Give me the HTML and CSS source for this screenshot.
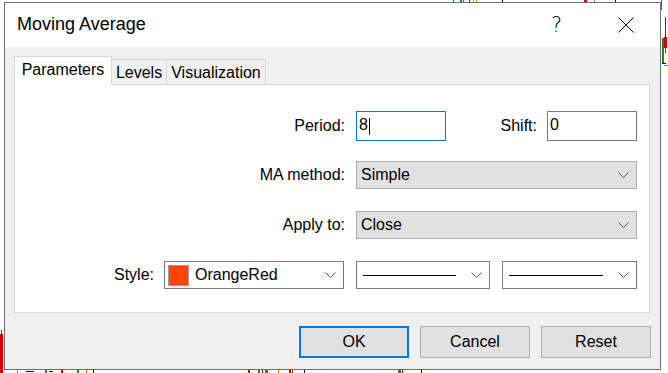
FILE: index.html
```html
<!DOCTYPE html>
<html lang="en">
<head>
  <meta charset="UTF-8">
  <title>Moving Average</title>
  <link rel="stylesheet" href="styles.css">
</head>
<body>

  <!-- chart behind the dialog, only the edges show -->
  <div class="chart">
    <span class="mk g" style="left:453px;top:0;width:1px;height:3px"></span>
    <span class="mk g" style="left:460px;top:0;width:2px;height:3px"></span>
    <span class="mk g" style="left:463px;top:0;width:1px;height:3px"></span>
    <span class="mk r" style="left:469px;top:0;width:1px;height:3px"></span>
    <span class="mk o" style="left:473px;top:0;width:1px;height:3px"></span>
    <span class="mk o" style="left:476px;top:0;width:1px;height:3px"></span>
    <span class="mk n" style="left:502px;top:0;width:1px;height:2px"></span>
    <span class="mk r" style="left:584px;top:0;width:3px;height:3px"></span>
    <span class="mk o" style="left:594px;top:0;width:1px;height:3px"></span>
    <span class="mk n" style="left:615px;top:0;width:1px;height:2px"></span>

    <span class="mk g" style="left:661px;top:0;width:1px;height:10px"></span>
    <span class="mk r" style="left:665px;top:17px;width:1px;height:36px"></span>
    <span class="mk r" style="left:664px;top:37px;width:3px;height:11px"></span>
    <span class="mk g" style="left:662px;top:38px;width:2px;height:26px"></span>
    <span class="mk n" style="left:662px;top:63px;width:4px;height:1px"></span>
    <span class="mk o" style="left:664px;top:65px;width:4px;height:1px"></span>

    <span class="mk r" style="left:1px;top:330px;width:1px;height:4px"></span>
    <span class="mk r" style="left:0;top:334px;width:3px;height:39px"></span>

    <span class="mk o" style="left:17px;top:370px;width:1px;height:3px"></span>
    <span class="mk n" style="left:26px;top:371px;width:8px;height:1px"></span>
    <span class="mk g" style="left:45px;top:370px;width:2px;height:3px"></span>
    <span class="mk n" style="left:49px;top:371px;width:4px;height:1px"></span>
    <span class="mk r" style="left:61px;top:370px;width:2px;height:3px"></span>
    <span class="mk g" style="left:77px;top:370px;width:2px;height:3px"></span>
    <span class="mk o" style="left:86px;top:370px;width:1px;height:3px"></span>
    <span class="mk n" style="left:93px;top:370px;width:1px;height:3px"></span>
    <span class="mk r" style="left:248px;top:370px;width:2px;height:3px"></span>
    <span class="mk g" style="left:258px;top:370px;width:2px;height:3px"></span>
    <span class="mk r" style="left:262px;top:370px;width:1px;height:3px"></span>
    <span class="mk g" style="left:265px;top:370px;width:3px;height:3px"></span>
    <span class="mk o" style="left:278px;top:370px;width:1px;height:3px"></span>
    <span class="mk r" style="left:289px;top:370px;width:2px;height:3px"></span>
    <span class="mk g" style="left:292px;top:370px;width:1px;height:3px"></span>
    <span class="mk n" style="left:304px;top:370px;width:1px;height:3px"></span>
    <span class="mk g" style="left:398px;top:370px;width:3px;height:3px"></span>
    <span class="mk r" style="left:402px;top:370px;width:1px;height:3px"></span>
    <span class="mk n" style="left:421px;top:370px;width:1px;height:3px"></span>
  </div>

  <div class="dialog">
    <div class="titlebar">
      <span class="title">Moving Average</span>
      <span class="cap-btn help">?</span>
      <span class="cap-btn close">
        <svg width="16" height="16" viewBox="0 0 16 16">
          <path d="M0.5 0.5 L15.5 15.5 M15.5 0.5 L0.5 15.5" stroke="#000" stroke-width="1" fill="none"/>
        </svg>
      </span>
    </div>

    <div class="dialog-body">
      <div class="tabs">
        <div class="tab active">Parameters</div>
        <div class="tab">Levels</div>
        <div class="tab">Visualization</div>
      </div>

      <div class="panel">
        <div class="row row-first">
          <span class="lbl">Period:</span>
          <div class="field focused">8<span class="caret"></span></div>
          <span class="lbl lbl-shift">Shift:</span>
          <div class="field">0</div>
        </div>

        <div class="row">
          <span class="lbl">MA method:</span>
          <div class="select wide">
            <span class="select-text">Simple</span>
            <svg class="chev" width="11" height="6" viewBox="0 0 11 6"><polyline points="0.5,0.5 5.5,5.5 10.5,0.5" fill="none" stroke="#555" stroke-width="1"/></svg>
          </div>
        </div>

        <div class="row">
          <span class="lbl">Apply to:</span>
          <div class="select wide">
            <span class="select-text">Close</span>
            <svg class="chev" width="11" height="6" viewBox="0 0 11 6"><polyline points="0.5,0.5 5.5,5.5 10.5,0.5" fill="none" stroke="#555" stroke-width="1"/></svg>
          </div>
        </div>

        <div class="row">
          <span class="lbl lbl-style">Style:</span>
          <div class="select light color-select">
            <span class="swatch"></span>
            <span class="select-text">OrangeRed</span>
            <svg class="chev" width="11" height="6" viewBox="0 0 11 6"><polyline points="0.5,0.5 5.5,5.5 10.5,0.5" fill="none" stroke="#555" stroke-width="1"/></svg>
          </div>
          <div class="select light line-select">
            <span class="line-sample"></span>
            <svg class="chev" width="11" height="6" viewBox="0 0 11 6"><polyline points="0.5,0.5 5.5,5.5 10.5,0.5" fill="none" stroke="#555" stroke-width="1"/></svg>
          </div>
          <div class="select light line-select last">
            <span class="line-sample"></span>
            <svg class="chev" width="11" height="6" viewBox="0 0 11 6"><polyline points="0.5,0.5 5.5,5.5 10.5,0.5" fill="none" stroke="#555" stroke-width="1"/></svg>
          </div>
        </div>
      </div>

      <div class="buttons">
        <button class="btn default">OK</button>
        <button class="btn">Cancel</button>
        <button class="btn">Reset</button>
      </div>
    </div>
  </div>

</body>
</html>
```

FILE: styles.css
```css
* { box-sizing: border-box; margin: 0; padding: 0; }
body {
  font-family: 'Liberation Sans', Arial, sans-serif;
  font-size: 16px;
  color: #000;
  background: #fff;
  padding: 2px 0 0 4px;
  position: relative;
  width: 668px;
  height: 373px;
  overflow: hidden;
}

/* chart marks around the window */
.chart { position: absolute; left: 0; top: 0; width: 668px; height: 373px; }
.mk { position: absolute; display: block; }
.mk.g { background: #1a8a1a; }
.mk.r { background: #d00000; }
.mk.o { background: #ff6a00; }
.mk.n { background: #000080; }

.dialog {
  position: relative;
  width: 657px;
  height: 368px;
  border: 1px solid #6f6f6f;
  background: #f0f0f0;
  display: flex;
  flex-direction: column;
}

.titlebar {
  height: 44px;
  background: #fff;
  display: flex;
  align-items: center;
  padding-left: 12px;
}
.title {
  font-size: 18px;
  flex: 1;
  padding-bottom: 1px;
}
.cap-btn {
  width: 68px;
  height: 44px;
  display: flex;
  align-items: center;
  justify-content: center;
}
.help {
  font-family: 'DejaVu Sans', sans-serif;
  font-weight: 200;
  font-size: 21px;
  color: #000;
  padding-right: 3px;
}
.close svg { display: block; }

.dialog-body {
  flex: 1;
  padding: 10px 9px 0 9px;
}

/* tabs */
.tabs {
  display: flex;
  align-items: flex-end;
  height: 27px;
}
.tab {
  height: 25px;
  border: 1px solid #d9d9d9;
  border-bottom: none;
  border-left: none;
  background: #f0f0f0;
  display: flex;
  align-items: center;
  justify-content: center;
  padding-top: 1px;
}
.tab:nth-child(2) { width: 55px; }
.tab:nth-child(3) { width: 99px; }
.tab.active {
  width: 98px;
  height: 29px;
  margin-bottom: -1px;
  background: #fff;
  border-left: 1px solid #d9d9d9;
  position: relative;
  z-index: 1;
  padding-top: 0;
  padding-bottom: 2px;
}

.panel {
  height: 229px;
  margin-right: 1px;
  background: #fff;
  border: 1px solid #d9d9d9;
  padding: 26px 12px 0 0;
  display: flex;
  flex-direction: column;
}
.row {
  display: flex;
  justify-content: flex-end;
  align-items: center;
  height: 28px;
  margin-top: 22px;
}
.row-first {
  height: 30px;
  margin-top: 0;
  margin-bottom: -2px;
}
.lbl { margin-right: 11px; white-space: nowrap; }
.lbl-shift { width: 91px; text-align: right; margin-right: 10px; }
.lbl-style { margin-right: 10px; }

.field {
  width: 90px;
  height: 30px;
  border: 1px solid #7a7a7a;
  background: #fff;
  padding: 0 2px 3px;
  display: flex;
  align-items: center;
}
.field.focused { border-color: #0078d7; }
.caret {
  display: inline-block;
  width: 1px;
  height: 17px;
  background: #000;
  margin-left: 1px;
  margin-top: 3px;
}

.select {
  height: 28px;
  border: 1px solid #adadad;
  background: #e1e1e1;
  display: flex;
  align-items: center;
  padding: 0 7px 0 4px;
}
.select.wide { width: 281px; }
.select.light { background: #fff; border-color: #7a7a7a; }
.select-text { flex: 1; }
.chev { display: block; flex: none; }

.color-select { width: 180px; padding-left: 3px; }
.swatch {
  width: 21px;
  height: 21px;
  background: #ff4500;
  border: 1px solid #a0a0a0;
  margin-right: 6px;
}
.line-select { width: 134px; margin-left: 12px; padding-left: 6px; }
.line-select.last { width: 135px; }
.line-sample {
  flex: 1;
  height: 1px;
  background: #000;
  margin-right: 15px;
}

/* bottom buttons */
.buttons {
  display: flex;
  justify-content: flex-end;
  gap: 11px;
  margin-top: 13px;
}
.btn {
  width: 110px;
  height: 32px;
  font-family: 'Liberation Sans', Arial, sans-serif;
  font-size: 16px;
  color: #000;
  background: #e1e1e1;
  border: 1px solid #adadad;
}
.btn.default { border: 2px solid #0078d7; }
```
